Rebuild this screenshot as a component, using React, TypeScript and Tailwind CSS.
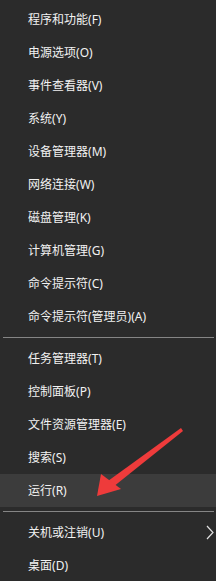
import React from 'react';

type Item = { label: string; key: string } | 'sep';

const items: Item[] = [
    { label: '程序和功能', key: 'F' },
    { label: '电源选项', key: 'O' },
    { label: '事件查看器', key: 'V' },
    { label: '系统', key: 'Y' },
    { label: '设备管理器', key: 'M' },
    { label: '网络连接', key: 'W' },
    { label: '磁盘管理', key: 'K' },
    { label: '计算机管理', key: 'G' },
    { label: '命令提示符', key: 'C' },
    { label: '命令提示符(管理员)', key: 'A' },
    'sep',
    { label: '任务管理器', key: 'T' },
    { label: '控制面板', key: 'P' },
    { label: '文件资源管理器', key: 'E' },
    { label: '搜索', key: 'S' },
    { label: '运行', key: 'R' },
    'sep',
    { label: '关机或注销', key: 'U' },
    { label: '桌面', key: 'D' },
];

const App: React.FC = () => {
    return (
        <div
            className="relative w-[216px] h-[581px] overflow-hidden bg-[#2b2b2b] text-[#f2f2f2] text-[12px] pt-[3px] select-none"
            style={{ fontFamily: '"Noto Sans", "Noto Sans CJK SC", sans-serif' }}
        >
            {items.map((it, i) =>
                it === 'sep' ? (
                    <div key={i} className="py-[4px] pl-[3px] pr-[2px]">
                        <div className="h-px bg-[#858585]" />
                    </div>
                ) : (
                    <div
                        key={i}
                        className={`relative flex items-center h-[33px] pl-[28px] ${it.key === 'R' ? 'bg-[#3c3c3c]' : ''}`}
                    >
                        <span>
                            {it.label}({it.key})
                        </span>
                        {it.key === 'U' && (
                            <svg className="absolute right-[1px] top-[9px]" width="10" height="15" viewBox="0 0 10 15">
                                <polyline points="2,1 8,7.5 2,14" fill="none" stroke="#e0e0e0" strokeWidth="1.2" />
                            </svg>
                        )}
                    </div>
                )
            )}

            {/* red annotation arrow */}
            <svg className="absolute left-0 top-0 pointer-events-none" width="216" height="581" viewBox="0 0 216 581">
                <polygon points="181,428 183,431 113,487 108,481" fill="#ee3b3b" />
                <polygon points="97,496 101,474 121,489" fill="#ee3b3b" />
            </svg>
        </div>
    );
};

export default App;
